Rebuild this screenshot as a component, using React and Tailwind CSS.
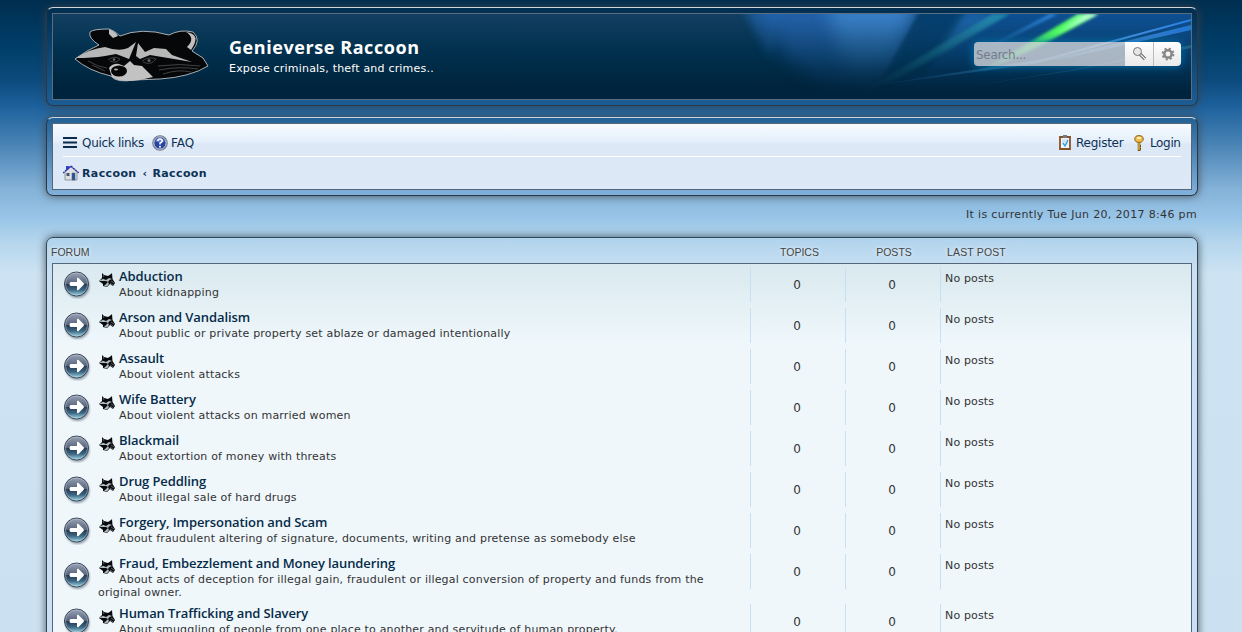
import React from "react";

const forums = [
  ["Abduction", "About kidnapping"],
  ["Arson and Vandalism", "About public or private property set ablaze or damaged intentionally"],
  ["Assault", "About violent attacks"],
  ["Wife Battery", "About violent attacks on married women"],
  ["Blackmail", "About extortion of money with threats"],
  ["Drug Peddling", "About illegal sale of hard drugs"],
  ["Forgery, Impersonation and Scam", "About fraudulent altering of signature, documents, writing and pretense as somebody else"],
  ["Fraud, Embezzlement and Money laundering", "About acts of deception for illegal gain, fraudulent or illegal conversion of property and funds from the original owner.", true],
  ["Human Trafficking and Slavery", "About smuggling of people from one place to another and servitude of human property."],
];

function RaccoonLogo() {
  return (
    <svg className="block h-[54px] w-[136px]" viewBox="0 0 136 54">
      <path d="M1 31 13 23 25 17Q14 10 16 4Q19 1 35 1Q41 3 46 8Q67 -1 95 7Q106 1 119 4Q128 12 118 23L129 30L134 38Q116 49 86 51L60 52Q42 55 37 48Q15 43 1 31Z" fill="#060708" stroke="#b9c0c5" strokeWidth=".9" />
      <path d="M35 1 Q42 4 44 8L39 10 35 6Z M112 4Q128 6 117 22L113 19Q122 10 112 4Z" fill="#bfc0c0" />
      <path d="M2 30Q15 21 31 19Q45 24 54 20L62 14 55 31 50 29 42 26 31 28Q18 30 2 30Z M64 15 71 24 80 20 92 21 98 27 118 34 88 29 76 27 66 31 62 28Z" fill="#b8b8b8" />
      <path d="M62 18 60 32 56 32Z" fill="#060708" />
      <path d="M35 40Q39 35 45 36L50 38 56 33 60 37 68 38 79 49 66 52Q45 55 38 49Z" fill="#c2c2c2" />
      <ellipse cx="45" cy="43" rx="8" ry="5.5" fill="#050505" />
      <ellipse cx="42" cy="41.5" rx="2" ry="1" fill="#aaa" />
      <g fill="none" stroke="#45484a" strokeWidth=".9">
        <path d="M34 32Q40 27 46 31Q43 36 36 33M68 33Q75 28 82 31Q77 38 69 34" />
        <path d="M14 33Q24 39 33 40M18 37 31 43M84 38Q106 35 126 38M85 42Q106 38 124 41M89 46Q104 41 117 44" />
      </g>
      <circle cx="40" cy="31.5" r="1.3" fill="#666" /><circle cx="75" cy="32.5" r="1.5" fill="#666" />
    </svg>
  );
}

function MiniRaccoon() {
  return (
    <svg className="ml-px mr-1 inline-block h-4 w-4 align-[-7px]" viewBox="0 0 16 16">
      <path d="M3 1 5 3 9 4 12 2 13 1 13.5 7 16 11 14 14 11 12 8 15 4 14 4 12 0 9 3 6Z" fill="#080a0b" />
      <path d="M0 9 4 6.8 7 8 10 6 13 7 10.5 8 9 10 7 9 4 9ZM6 13 9 10 10 12 8 14.5 5 14Z" fill="#aebbc0" />
      <path d="M12 9 15 11M11 11l3 2M4 3l1 2" stroke="#7c878a" strokeWidth=".7" fill="none" />
    </svg>
  );
}

function ForumArrow() {
  return (
    <svg className="block h-7 w-7" viewBox="0 0 28 28">
      <defs>
        <linearGradient id="ball" x2="0" y2="1"><stop stopColor="#9aa4b6" /><stop offset=".48" stopColor="#58657c" /><stop offset=".5" stopColor="#25384f" /><stop offset=".75" stopColor="#3d6682" /><stop offset="1" stopColor="#a1e0ee" /></linearGradient>
        <filter id="soft"><feGaussianBlur stdDeviation=".8" /></filter>
      </defs>
      <circle cx="14.5" cy="15" r="12" fill="#456" opacity=".55" filter="url(#soft)" />
      <circle cx="13.5" cy="13" r="12" fill="url(#ball)" stroke="#3c4659" />
      <circle cx="13.5" cy="13" r="11" fill="none" stroke="#c0cbd7" strokeOpacity=".5" />
      <path d="M7.5 11h6.5V7.7Q14 6 15.5 7L20.5 12Q21.5 13 20.5 14L15.5 19Q14 20 14 18.3V15H7.5Q5.5 13 7.5 11Z" fill="white" />
    </svg>
  );
}

function Aurora() {
  return (
    <svg className="absolute right-0 top-0 h-[85px] w-[520px]" viewBox="0 0 520 85" preserveAspectRatio="none">
      <defs>
        <linearGradient id="fade" x2="0" y2="1"><stop stopColor="white" /><stop offset=".3" stopColor="#999" /><stop offset=".65" stopColor="#333" /><stop offset=".95" stopColor="black" /></linearGradient>
        <mask id="down"><rect width="520" height="85" fill="url(#fade)" /></mask>
        <filter id="blurA" x="-30%" y="-50%" width="160%" height="200%"><feGaussianBlur stdDeviation="9" /></filter>
        <filter id="blurB" x="-10%" y="-20%" width="120%" height="140%"><feGaussianBlur stdDeviation="1.5" /></filter>
        <filter id="blurD" x="-30%" y="-30%" width="160%" height="160%"><feGaussianBlur stdDeviation="4" /></filter>
        <filter id="blurC"><feGaussianBlur stdDeviation=".6" /></filter>
        <linearGradient id="green" x1="1" x2="0"><stop stopColor="#b0ffd0" /><stop offset=".3" stopColor="#52ff61" /><stop offset=".75" stopColor="#25b968" /><stop offset="1" stopColor="#08a46b" stopOpacity=".1" /></linearGradient>
        <linearGradient id="ray" x1="1" x2="0"><stop stopColor="#2681e8" /><stop offset=".25" stopColor="#4c8fd8" /><stop offset=".6" stopColor="#2f78a8" stopOpacity=".5" /><stop offset="1" stopColor="#125080" stopOpacity="0" /></linearGradient>
        <linearGradient id="teal" x1="1" x2="0"><stop stopColor="#2d8291" /><stop offset="1" stopColor="#2d8291" stopOpacity="0" /></linearGradient>
      </defs>
      <g mask="url(#down)">
        <path d="M80-15H250L230 60 190 85 145 70 110 40Z" fill="#2160a9" filter="url(#blurA)" />
        <path d="M155-10H245L215 60 175 60Z" fill="#438dd5" opacity=".75" filter="url(#blurA)" />
        <path d="M72-5H112L100 45Z" fill="#2465b0" opacity=".6" filter="url(#blurD)" />
        <path d="M254-8H550V75L300 85 215 80Z" fill="#0e4f92" filter="url(#blurD)" />
        <path d="M249-3H296L255 60 205 75Z" fill="#053761" opacity=".65" filter="url(#blurB)" />
        <path d="M292 0H330L262 44Z" fill="#3288ce" opacity=".4" filter="url(#blurD)" />
        <path d="M322 0 339 0 225 66 190 78Z" fill="#299eb8" opacity=".7" filter="url(#blurB)" />
        <path d="M379 0 387 0 295 45Z" fill="#3b9df8" opacity=".75" filter="url(#blurB)" />
      </g>
      <path d="M407 0 428 0 382 25Q350 42 308 58Z" fill="url(#green)" filter="url(#blurB)" />
      <path d="M416 0 425 0 385 20Z" fill="#c8ffe0" opacity=".65" filter="url(#blurB)" />
      <path d="M520 7 363 50 185 74 372 45 520 5Z" fill="url(#ray)" filter="url(#blurC)" />
      <path d="M520 11 394 42 260 63 401 43 520 16Z" fill="url(#ray)" opacity=".8" filter="url(#blurC)" />
      <path d="M520 31 400 56 260 78 400 57 520 34Z" fill="url(#teal)" opacity=".55" filter="url(#blurC)" />
    </svg>
  );
}

function HouseIcon() {
  return <svg className="mb-[3px] h-4 w-4" viewBox="0 0 16 16"><path d="M3 1h3v4H3z" fill="#34d" /><path d="M2 7v8h12V7L8 2Z" fill="#dce0e5" stroke="#8d949e" /><path d="M0 8 8 1 16 8" fill="none" stroke="#2529aa" strokeWidth="1.3" strokeDasharray="2 .7" /><path d="M3.5 8h3v3h-3z" fill="#465670" /><path d="M9 8h3v7H9z" fill="#1c52a4" stroke="#666" strokeWidth=".6" /></svg>;
}

function QuestionIcon() {
  return <svg className="h-4 w-4" viewBox="0 0 16 16"><circle cx="8" cy="8" r="7.2" fill="#27469e" stroke="#777c87" strokeWidth="1.2" /><circle cx="8" cy="8" r="6.2" fill="none" stroke="#d8dce4" /><path d="M3 6Q8 0 13 6L9 8Z" fill="#6985d6" /><path d="M5.8 6Q5.8 4 8 4T10.2 6Q10.2 7.2 8 8.2V9.6" fill="none" stroke="white" strokeWidth="1.5" /><circle cx="8" cy="11.8" r="1" fill="white" /></svg>;
}

const panel = "rounded-[7px] border border-[#26384a] border-t-[#d0d6da] p-[5px] shadow-[0_0_8px_rgba(65,65,65,0.85)]";

export default function App() {
  return (
    <div className="h-[632px] overflow-hidden bg-[linear-gradient(#002e50_0px,#003e68_45px,#0c4a7c_80px,#1c609b_105px,#4a84b5_145px,#84b2d8_189px,#98c5e7_218px,#b5d6ed_242px,#cde3f3_274px,#cbe1f1_632px)] pl-[45px] pr-[43px] pt-[7px] font-['DejaVu_Sans',sans-serif] text-[11px] text-[#333]">
      <div className="mx-px flex flex-col">
        <header className={`${panel} h-[99px] bg-[linear-gradient(#002e50,#1c5d94)]`}>
          <div className="relative flex h-[87px] overflow-hidden border border-[#5b6e7f] bg-[linear-gradient(#123f61,#01304e_45%,#00243d_85%)]">
            <Aurora />
            <div className="ml-[21px] mt-[14px]"><RaccoonLogo /></div>
            <div className="ml-[19px] mt-[20px] whitespace-nowrap text-white">
              <h1 className="h-[27px] font-['Open_Sans',sans-serif] text-[18px] font-bold leading-[26px] tracking-[0.57px]">Genieverse Raccoon</h1>
              <p className="leading-[15px] tracking-[0.2px]">Expose criminals, theft and crimes..</p>
            </div>
            <div className="relative ml-auto mr-[10px] mt-[28px] flex h-6 w-[207px] overflow-hidden rounded-[4px] shadow-[0_0_10px_#0075b0]">
              <div className="w-[151px] bg-[#d2d5dacc] pl-[2px] pt-px text-[12px] leading-6 tracking-[-0.3px] text-[#737d8b]">Search...</div>
              <div className="flex w-[28px] items-center justify-center bg-gradient-to-b from-white to-[#e9e9e9]">
                <svg className="h-4 w-4" viewBox="0 0 16 16"><path d="m9 8 5 5" stroke="#666" strokeWidth="3.2" /><path d="m9 8 5 5" stroke="#eee" strokeWidth="1.3" /><circle cx="6.5" cy="5.5" r="4" fill="#e5e7e8" stroke="#777" /></svg>
              </div>
              <div className="flex w-[28px] items-center justify-center border-l border-[#bbb] bg-gradient-to-b from-white to-[#e9e9e9]">
                <svg className="h-4 w-4" viewBox="0 0 16 16"><circle cx="8" cy="8" r="3.7" fill="none" stroke="#888" strokeWidth="2.5" /><circle cx="8" cy="8" r="5.4" fill="none" stroke="#888" strokeWidth="2" strokeDasharray="2.2 2.04" /></svg>
              </div>
            </div>
          </div>
        </header>

        <nav className={`${panel} mt-[11px] h-[79px] bg-[linear-gradient(#236196,#82b1db)]`}>
          <div className="h-[67px] border border-[#536779] bg-[linear-gradient(#f7fbff_0px,#e4effb_18px,#dce8f6_20px,#dde9f7_65px)] px-[10px] text-[12px] text-[#0d3155]">
            <div className="flex h-[33px] items-center border-b border-white pt-[5px]">
              <svg className="h-[11px] w-[14px]" viewBox="0 0 14 11"><path d="M0 1h14M0 5.5h14M0 10h14" stroke="#0b2c4c" strokeWidth="2" /></svg>
              <span className="ml-[5px] w-[70px] whitespace-nowrap tracking-[-0.3px]">Quick links</span>
              <QuestionIcon /><span className="ml-[3px]">FAQ</span>
              <svg className="ml-auto h-4 w-3" viewBox="0 0 12 16"><path d="M1 2h10v12H1z" fill="#edf7fb" stroke="#885125" strokeWidth="1.8" /><path d="M4 0h4v3H4z" fill="#727983" /><path d="M3 5h6M3 7h6M3 9h6" stroke="#c4d2dc" /><path d="m4 8 2 3 3-6" fill="none" stroke="#269be5" strokeWidth="1.3" /></svg>
              <span className="ml-[5px] w-[58px] whitespace-nowrap tracking-[-0.25px]">Register</span>
              <svg className="h-4 w-[10px]" viewBox="0 0 10 16"><path d="M5 7v9M5 11h2M5 14h2" stroke="#795011" strokeWidth="2.5" /><path d="M5 7v8" stroke="#f2c34e" strokeWidth="1.2" /><ellipse cx="5" cy="4" rx="4.2" ry="3.4" fill="#f2bd42" stroke="#8c611a" /><path d="M3 3h4" stroke="#fff" strokeWidth="1.3" /></svg>
              <span className="ml-[6px] w-[31px] whitespace-nowrap tracking-[-0.35px]">Login</span>
            </div>
            <div className="flex h-8 items-center pt-[2px] text-[11px] font-bold tracking-[0.38px]"><HouseIcon /><span className="ml-[3px]">Raccoon</span><span className="ml-[6px] mr-[5px]">‹</span><span>Raccoon</span></div>
          </div>
        </nav>

        <p className="h-[41px] pr-px pt-[11px] text-right leading-[15px] tracking-[0.34px]">It is currently Tue Jun 20, 2017 8:46 pm</p>

        <main className="h-[500px] rounded-[7px] border border-[#32475a] bg-[linear-gradient(#b0d3ed,#cbe1f3_35px)] px-[5px] shadow-[0_0_8px_rgba(40,50,60,0.8)]">
          <div className="flex h-[25px] items-center whitespace-nowrap pt-[3px] font-['Liberation_Sans',sans-serif] text-[10.5px] leading-3 text-[#444] [text-shadow:0_0_4px_white]">
            <span className="-ml-px w-[700px]">FORUM</span><span className="w-[97px] text-center">TOPICS</span><span className="w-[92px] text-center">POSTS</span><span className="ml-[7px] tracking-[0.15px]">LAST POST</span>
          </div>
          <div className="h-[480px] border border-[#536779] bg-[linear-gradient(#d9e9ef,#eff7fb_80px)]">
            {forums.map(([title, text, long]) => (
              <section key={title} className={`flex pt-[3px] ${long ? "h-[50px]" : "h-[41px]"}`}>
                <div className={`ml-[10px] w-[35px] shrink-0 ${long ? "pt-[8px]" : "pt-[4px]"}`}><ForumArrow /></div>
                <div className="w-[652px] shrink-0">
                  <div className="h-[19px] whitespace-nowrap font-['Open_Sans',sans-serif] text-[13px] font-semibold leading-[18px] tracking-[-0.1px] text-[#062b49]"><MiniRaccoon />{title}</div>
                  <p className="w-[620px] indent-[21px] leading-[13px] tracking-[0.185px]">{text}</p>
                </div>
                <div className="h-[35px] w-[95px] shrink-0 border-l border-[#c6dff2] pr-[2px] pt-px text-center text-[12px] leading-[35px]">0</div>
                <div className="h-[35px] w-[95px] shrink-0 border-l border-[#c6dff2] pr-[2px] pt-px text-center text-[12px] leading-[35px]">0</div>
                <div className="h-[35px] border-l border-[#c6dff2] pl-[4px] pt-[4px] leading-[15px] tracking-[0.15px]">No posts</div>
              </section>
            ))}
          </div>
        </main>
      </div>
    </div>
  );
}
